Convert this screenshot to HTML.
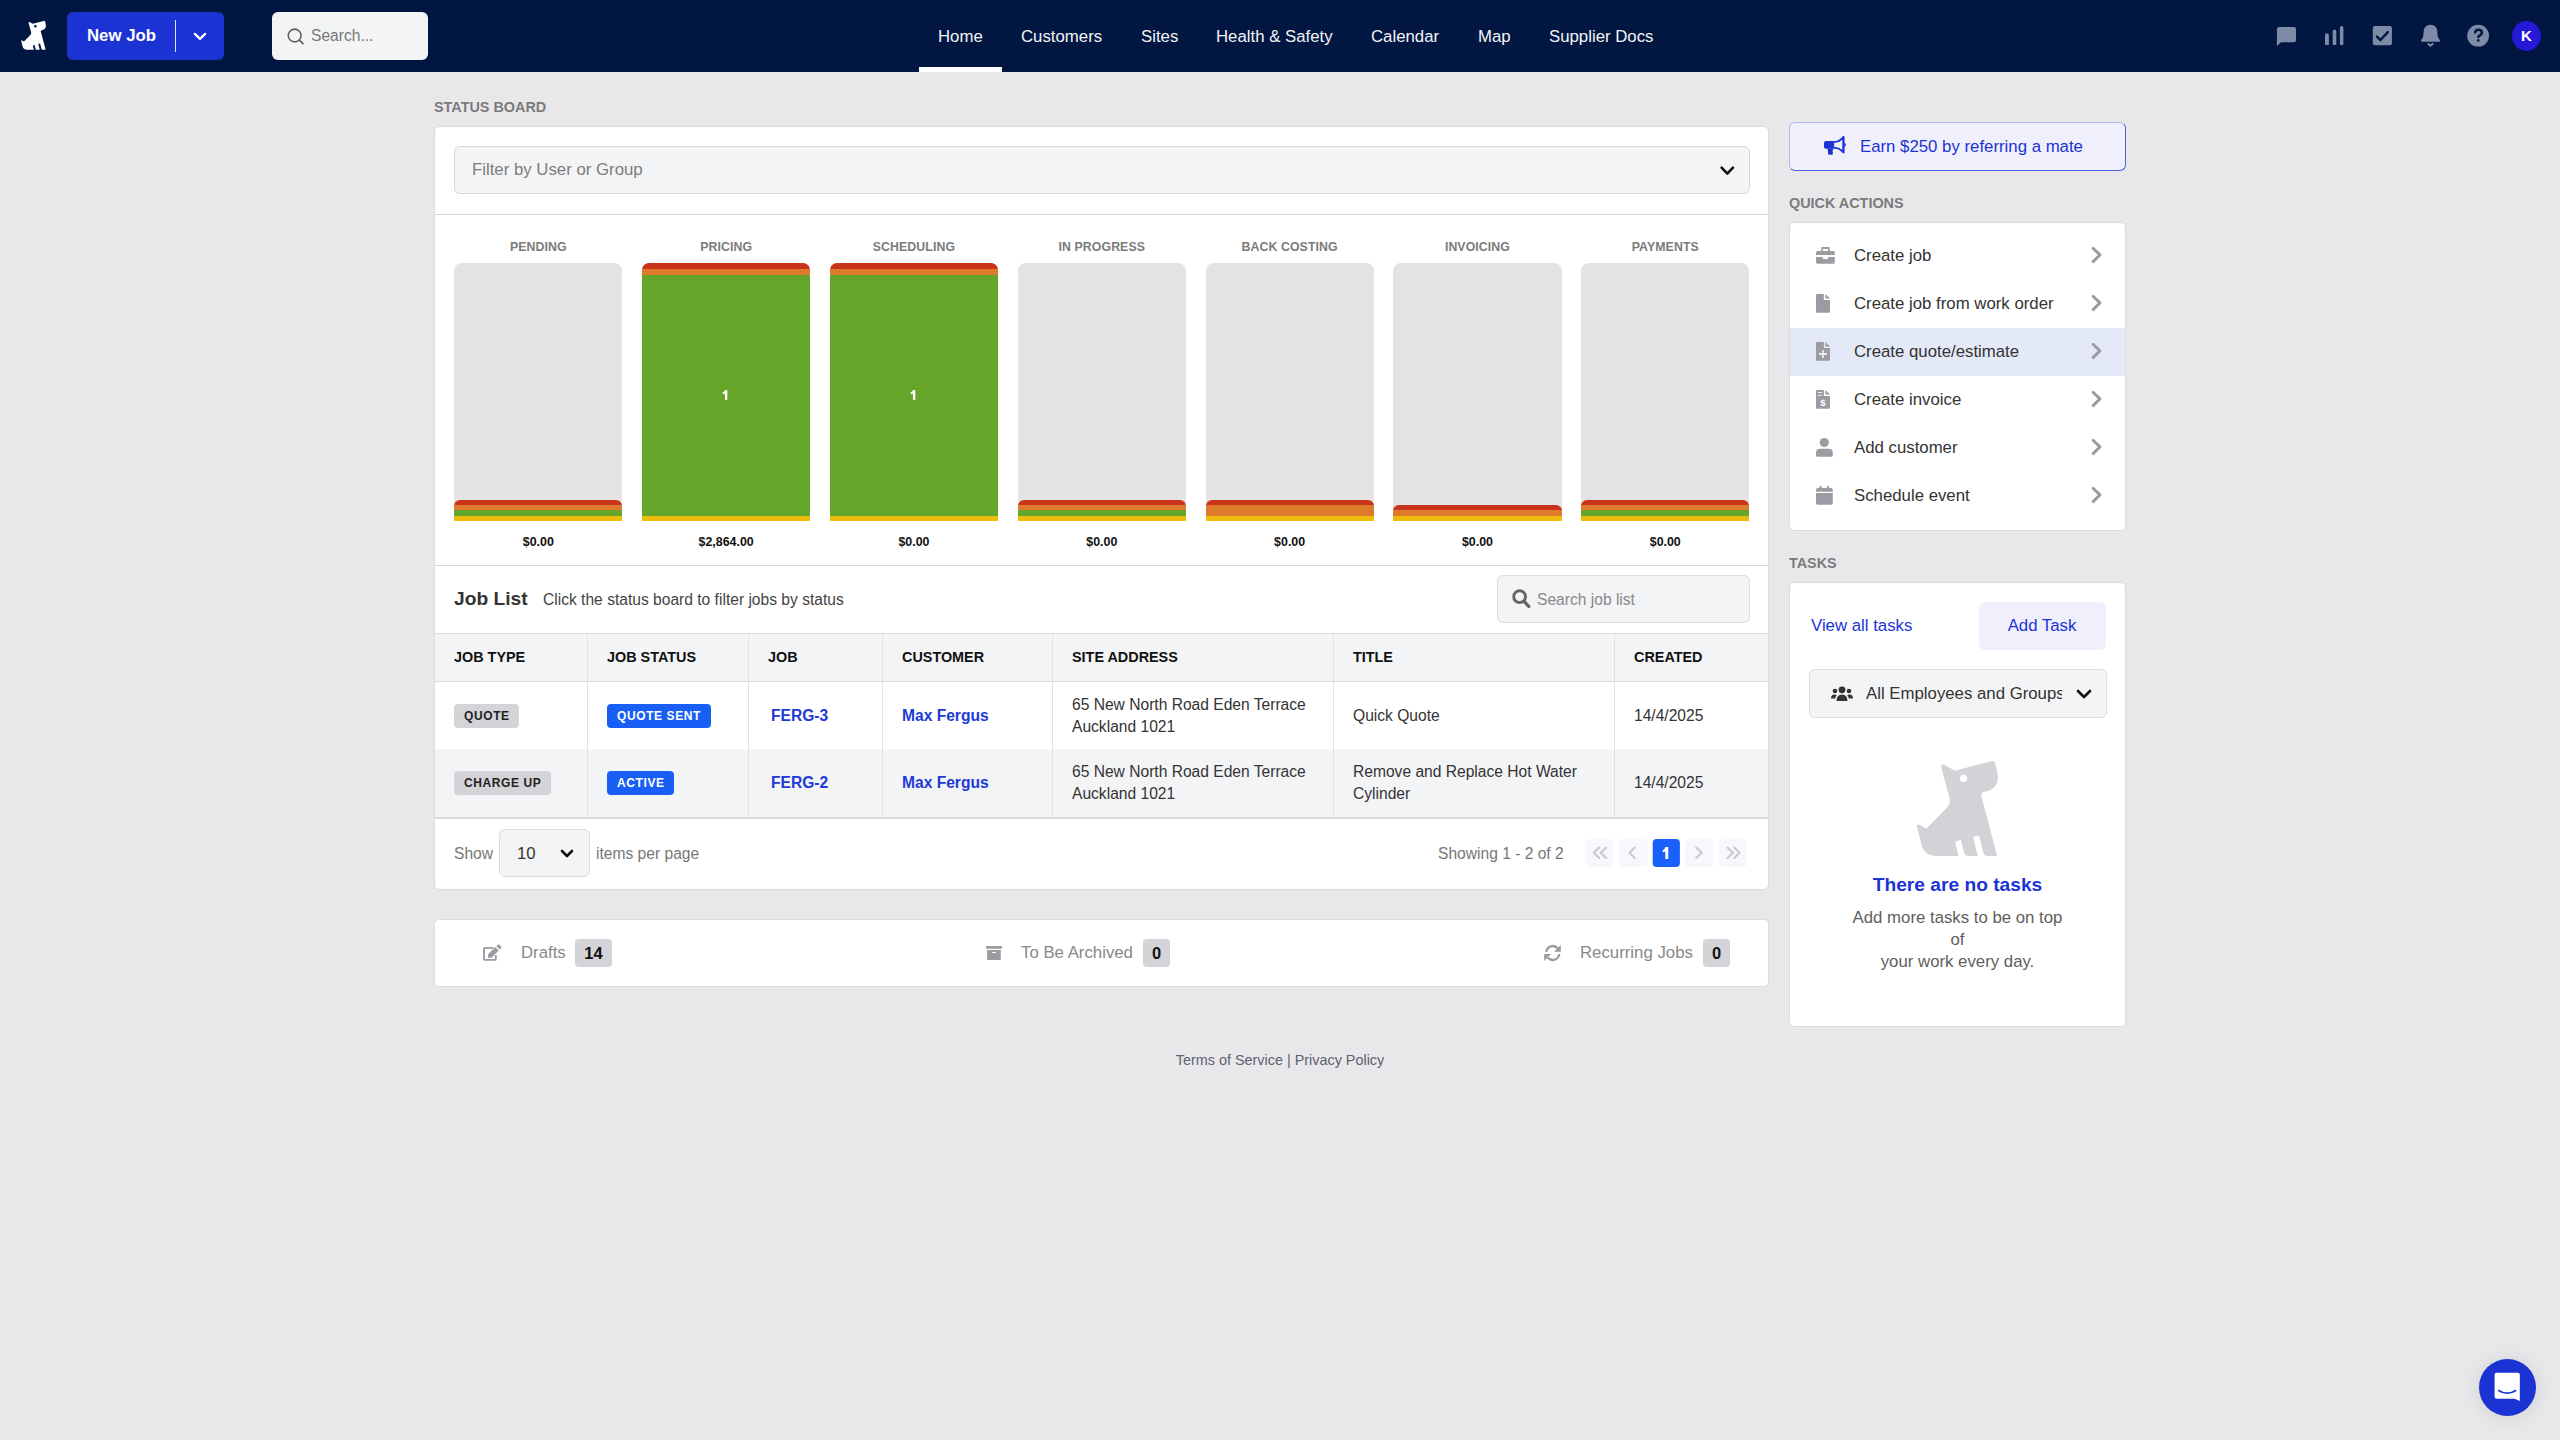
<!DOCTYPE html>
<html><head><meta charset="utf-8">
<style>
*{box-sizing:border-box;margin:0;padding:0}
html,body{width:2560px;height:1440px;overflow:hidden}
body{background:#e8e8eb;font-family:"Liberation Sans",sans-serif;position:relative;color:#333}
.abs{position:absolute}
/* NAV */
#nav{position:absolute;left:0;top:0;width:2560px;height:72px;background:#011640}
#newjob{left:67px;top:12px;width:157px;height:48px;background:#1c33d4;border-radius:6px;color:#fff}
#newjob .t{position:absolute;left:20px;top:0;line-height:48px;font-size:16.8px;font-weight:bold}
#newjob .sep{position:absolute;left:108px;top:8px;width:1px;height:32px;background:#dfe3f8}
#search{left:272px;top:12px;width:156px;height:48px;background:#f3f4f6;border-radius:6px}
#search .t{position:absolute;left:39px;top:0;line-height:48px;font-size:15.6px;color:#777}
.navl{position:absolute;top:0.5px;line-height:72px;font-size:16.8px;color:#f2f4f8}
#homebar{left:919px;top:67px;width:83px;height:5px;background:#fff}
.ni{position:absolute;top:24px}
#avatar{left:2512px;top:21px;width:29px;height:30px;border-radius:50%;background:#2518d6;color:#fff;font-weight:bold;font-size:15px;text-align:center;line-height:30px}
/* section labels */
.slabel{position:absolute;font-size:14.4px;font-weight:bold;color:#7b7b7b}
.card{position:absolute;background:#fff;border:1px solid #dcdce0;border-radius:5px}
.blabel{font-size:12.3px;font-weight:bold;color:#7b7b7b;text-align:center;line-height:20px;letter-spacing:0.1px}
.bamt{font-size:12.4px;font-weight:bold;color:#111;text-align:center;line-height:20px}
.th{font-size:14.4px;font-weight:bold;color:#111;line-height:20px}
.td{font-size:15.6px;color:#333;line-height:22px}
.link{font-size:15.6px;font-weight:bold;color:#1d3ad6;line-height:20px}
.badge{height:24px;line-height:24px;padding:0 9.5px 0 10px;border-radius:4px;font-size:12px;font-weight:bold;letter-spacing:0.6px}
.badge.grey{background:#d3d3d8;color:#222}
.badge.blue{background:#1a5ff5;color:#fff}
.pg{width:28px;height:28px;background:#f6f7fb;border-radius:4px;overflow:hidden}
.ft{font-size:16.8px;color:#888;line-height:24px}
.cnt{height:28px;line-height:28px;text-align:center;background:#d3d3d8;border-radius:4px;font-size:16.5px;font-weight:bold;color:#111}
.qat{font-size:16.8px;color:#333;line-height:48px}
</style></head>
<body>
<div id="nav">
  <svg class="abs" style="left:19.13px;top:19.2px" width="29.06" height="32.1" viewBox="0 0 1303 1440"><path d="M615 215 L1115 85 Q1160 72 1170 115 L1200 250 Q1215 330 1190 390 Q1140 490 1020 505 Q970 515 978 560 L1195 1385 L1065 1385 Q1020 1385 1008 1340 L945 1100 L865 1125 L930 1385 L795 1385 Q755 1385 745 1345 L695 1165 L620 1185 L665 1385 L365 1385 Q190 1385 155 1215 L97 990 Q90 940 135 960 L225 1010 L510 720 Q560 670 545 600 L430 175 Q420 120 470 135 Z" fill="#fff"/><circle cx="735" cy="322" r="55" fill="#011640"/></svg>
  <div id="newjob" class="abs"><span class="t">New Job</span><span class="sep"></span>
    <svg class="abs" style="left:126px;top:20px" width="14" height="10" viewBox="0 0 14 10"><path d="M1.9 1.9 L7 6.8 L12.1 1.9" stroke="#fff" stroke-width="2.3" fill="none" stroke-linecap="round" stroke-linejoin="round"/></svg>
  </div>
  <div id="search" class="abs">
    <svg class="abs" style="left:13px;top:14px" width="22" height="22" viewBox="0 0 22 22"><circle cx="9.65" cy="9.5" r="6.4" stroke="#606060" stroke-width="1.6" fill="none"/><path d="M14.3 14.2 L18 17.7" stroke="#606060" stroke-width="1.7" stroke-linecap="round"/></svg>
    <span class="t">Search...</span>
  </div>
  <span class="navl" style="left:938px">Home</span>
  <span class="navl" style="left:1021px">Customers</span>
  <span class="navl" style="left:1141px">Sites</span>
  <span class="navl" style="left:1216px">Health &amp; Safety</span>
  <span class="navl" style="left:1371px">Calendar</span>
  <span class="navl" style="left:1478px">Map</span>
  <span class="navl" style="left:1549px">Supplier Docs</span>
  <div id="homebar" class="abs"></div>
  <!-- right icons -->
<svg class="abs" style="left:2270px;top:20px" width="80" height="32" viewBox="0 0 80 32"><path d="M8.9 7 H24 Q26 7 26 9 V20.2 Q26 22.2 24 22.2 H11 L6.9 26 V9 Q6.9 7 8.9 7 Z" fill="#7d8ba6"/><path d="M55 15 Q55 13.2 56.95 13.2 Q58.9 13.2 58.9 15 V24.3 Q58.9 25 58.2 25 H55.7 Q55 25 55 24.3 Z" fill="#7d8ba6"/><path d="M62.7 11.4 Q62.7 9.6 64.5 9.6 Q66.3 9.6 66.3 11.4 V24.3 Q66.3 25 65.6 25 H63.4 Q62.7 25 62.7 24.3 Z" fill="#7d8ba6"/><path d="M69.9 7.8 Q69.9 6 71.65 6 Q73.4 6 73.4 7.8 V24.3 Q73.4 25 72.7 25 H70.6 Q69.9 25 69.9 24.3 Z" fill="#7d8ba6"/></svg><svg class="abs" style="left:2365px;top:20px" width="80" height="32" viewBox="0 0 80 32"><rect x="7.8" y="6" width="19.1" height="19.2" rx="2" fill="#7d8ba6"/><path d="M11.9 16.6 L15.4 20 L22.8 12.2" stroke="#011640" stroke-width="2.5" fill="none" stroke-linecap="round" stroke-linejoin="miter"/><path d="M65.5 4.8 Q71.8 4.8 72.3 11.5 L72.7 15.8 Q73 18.3 74.9 20.1 Q75.6 21.8 74 21.8 H57 Q55.4 21.8 56.1 20.1 Q58 18.3 58.3 15.8 L58.7 11.5 Q59.2 4.8 65.5 4.8 Z" fill="#7d8ba6"/><path d="M63.4 23.9 L65.5 25.7 L67.6 23.9" stroke="#7d8ba6" stroke-width="2" fill="none" stroke-linecap="round"/></svg><svg class="abs" style="left:2460px;top:18px" width="40" height="34" viewBox="0 0 40 34"><circle cx="18.1" cy="17.7" r="10.9" fill="#7d8ba6"/><path d="M15 14.3 Q15.8 11.7 18.6 11.7 Q21.9 11.7 21.9 14.7 Q21.9 16.2 20.2 17.2 Q18.3 18.3 18.3 19.1" stroke="#011640" stroke-width="2.5" fill="none" stroke-linecap="round"/><ellipse cx="18.3" cy="22.4" rx="1.3" ry="1.4" fill="#011640"/></svg>
  <div id="avatar" class="abs">K</div>
</div>

<div class="slabel" style="left:434px;top:99px">STATUS BOARD</div>
<div class="card" id="main" style="left:434px;top:126px;width:1335px;height:764px;overflow:hidden">
  <div class="abs" id="filter" style="left:19px;top:19px;width:1296px;height:48px;background:#f3f4f6;border:1px solid #d6d6db;border-radius:6px">
    <span class="abs" style="left:17px;top:0;line-height:46px;font-size:16.8px;color:#7d7d7d">Filter by User or Group</span>
    <svg class="abs" style="left:1264px;top:17px" width="16" height="12" viewBox="0 0 16 12"><path d="M2.6 3.6 L8.3 9.6 L14 3.6" stroke="#111" stroke-width="2.6" fill="none" stroke-linecap="round" stroke-linejoin="round"/></svg>
  </div>
  <div class="abs" style="left:0;top:87px;width:1335px;height:1px;background:#d6d6db"></div>
<div class="abs blabel" style="left:19.20px;top:110px;width:168.2px">PENDING</div>
<div class="abs" style="left:19.20px;top:136px;width:168.2px;height:258px;border-radius:8px 8px 0 0;background:#e3e3e3;overflow:hidden"><div class="abs" style="left:0;top:236.80px;width:100%;height:8.30px;background:#c8331a;border-radius:6px 6px 0 0;"></div><div class="abs" style="left:0;top:242.10px;width:100%;height:8.30px;background:#de7a2b;"></div><div class="abs" style="left:0;top:247.40px;width:100%;height:8.30px;background:#65a52a;"></div><div class="abs" style="left:0;top:252.70px;width:100%;height:8.30px;background:#ecbb0b;"></div></div>
<div class="abs bamt" style="left:19.20px;top:405px;width:168.2px">$0.00</div>
<div class="abs blabel" style="left:207.03px;top:110px;width:168.2px">PRICING</div>
<div class="abs" style="left:207.03px;top:136px;width:168.2px;height:258px;border-radius:7px 7px 0 0;overflow:hidden"><div class="abs" style="left:0;top:0;width:100%;height:9px;background:#c8331a"></div><div class="abs" style="left:0;top:6px;width:100%;height:7px;background:#de7a2b"></div><div class="abs" style="left:0;top:12px;width:100%;height:242px;background:#65a52a"></div><div class="abs" style="left:0;top:253px;width:100%;height:5px;background:#ecbb0b"></div><svg class="abs" style="left:68.1px;top:117px" width="30" height="30" viewBox="0 0 30 30"><path d="M15 10 H17.3 V19.8 H15 V13.4 Q14 13.9 12.7 13.9 V12.3 Q14.6 12.1 15.1 10 Z" fill="#fff"/></svg></div>
<div class="abs bamt" style="left:207.03px;top:405px;width:168.2px">$2,864.00</div>
<div class="abs blabel" style="left:394.86px;top:110px;width:168.2px">SCHEDULING</div>
<div class="abs" style="left:394.86px;top:136px;width:168.2px;height:258px;border-radius:7px 7px 0 0;overflow:hidden"><div class="abs" style="left:0;top:0;width:100%;height:9px;background:#c8331a"></div><div class="abs" style="left:0;top:6px;width:100%;height:7px;background:#de7a2b"></div><div class="abs" style="left:0;top:12px;width:100%;height:242px;background:#65a52a"></div><div class="abs" style="left:0;top:253px;width:100%;height:5px;background:#ecbb0b"></div><svg class="abs" style="left:68.1px;top:117px" width="30" height="30" viewBox="0 0 30 30"><path d="M15 10 H17.3 V19.8 H15 V13.4 Q14 13.9 12.7 13.9 V12.3 Q14.6 12.1 15.1 10 Z" fill="#fff"/></svg></div>
<div class="abs bamt" style="left:394.86px;top:405px;width:168.2px">$0.00</div>
<div class="abs blabel" style="left:582.69px;top:110px;width:168.2px">IN PROGRESS</div>
<div class="abs" style="left:582.69px;top:136px;width:168.2px;height:258px;border-radius:8px 8px 0 0;background:#e3e3e3;overflow:hidden"><div class="abs" style="left:0;top:236.80px;width:100%;height:8.30px;background:#c8331a;border-radius:6px 6px 0 0;"></div><div class="abs" style="left:0;top:242.10px;width:100%;height:8.30px;background:#de7a2b;"></div><div class="abs" style="left:0;top:247.40px;width:100%;height:8.30px;background:#65a52a;"></div><div class="abs" style="left:0;top:252.70px;width:100%;height:8.30px;background:#ecbb0b;"></div></div>
<div class="abs bamt" style="left:582.69px;top:405px;width:168.2px">$0.00</div>
<div class="abs blabel" style="left:770.52px;top:110px;width:168.2px">BACK COSTING</div>
<div class="abs" style="left:770.52px;top:136px;width:168.2px;height:258px;border-radius:8px 8px 0 0;background:#e3e3e3;overflow:hidden"><div class="abs" style="left:0;top:236.80px;width:100%;height:8.30px;background:#c8331a;border-radius:6px 6px 0 0;"></div><div class="abs" style="left:0;top:242.10px;width:100%;height:8.30px;background:#de7a2b;"></div><div class="abs" style="left:0;top:247.40px;width:100%;height:8.30px;background:#de7a2b;"></div><div class="abs" style="left:0;top:252.70px;width:100%;height:8.30px;background:#ecbb0b;"></div></div>
<div class="abs bamt" style="left:770.52px;top:405px;width:168.2px">$0.00</div>
<div class="abs blabel" style="left:958.35px;top:110px;width:168.2px">INVOICING</div>
<div class="abs" style="left:958.35px;top:136px;width:168.2px;height:258px;border-radius:8px 8px 0 0;background:#e3e3e3;overflow:hidden"><div class="abs" style="left:0;top:242.10px;width:100%;height:8.30px;background:#c8331a;border-radius:6px 6px 0 0;"></div><div class="abs" style="left:0;top:247.40px;width:100%;height:8.30px;background:#de7a2b;"></div><div class="abs" style="left:0;top:252.70px;width:100%;height:8.30px;background:#ecbb0b;"></div></div>
<div class="abs bamt" style="left:958.35px;top:405px;width:168.2px">$0.00</div>
<div class="abs blabel" style="left:1146.18px;top:110px;width:168.2px">PAYMENTS</div>
<div class="abs" style="left:1146.18px;top:136px;width:168.2px;height:258px;border-radius:8px 8px 0 0;background:#e3e3e3;overflow:hidden"><div class="abs" style="left:0;top:236.80px;width:100%;height:8.30px;background:#c8331a;border-radius:6px 6px 0 0;"></div><div class="abs" style="left:0;top:242.10px;width:100%;height:8.30px;background:#de7a2b;"></div><div class="abs" style="left:0;top:247.40px;width:100%;height:8.30px;background:#65a52a;"></div><div class="abs" style="left:0;top:252.70px;width:100%;height:8.30px;background:#ecbb0b;"></div></div>
<div class="abs bamt" style="left:1146.18px;top:405px;width:168.2px">$0.00</div>
  <div class="abs" style="left:0;top:438px;width:1335px;height:1px;background:#d6d6db"></div>
<!-- job list header -->
  <span class="abs" style="left:19px;top:458px;line-height:28px;font-size:19.2px;font-weight:bold;color:#333">Job List</span>
  <span class="abs" style="left:108px;top:461px;line-height:24px;font-size:15.6px;color:#444">Click the status board to filter jobs by status</span>
  <div class="abs" style="left:1062px;top:448px;width:253px;height:48px;background:#f3f4f6;border:1px solid #dcdce0;border-radius:6px">
    <svg class="abs" style="left:14px;top:13px" width="20" height="20" viewBox="0 0 20 20"><circle cx="7.6" cy="7.7" r="5.9" stroke="#666" stroke-width="2.9" fill="none"/><path d="M12 12.3 L16.8 17.3" stroke="#666" stroke-width="3.3" stroke-linecap="round"/></svg>
    <span class="abs" style="left:39px;top:1px;line-height:46px;font-size:15.6px;color:#888">Search job list</span>
  </div>
  <!-- table -->
<div class="abs" style="left:0;top:506px;width:1335px;height:49px;background:#f3f4f6;border-top:1px solid #dcdce0;border-bottom:1px solid #dcdce0"></div>
<div class="abs" style="left:0;top:622px;width:1335px;height:68px;background:#f3f4f6"></div>
<div class="abs" style="left:0;top:690px;width:1335px;height:2px;background:#dcdce0"></div>
<div class="abs" style="left:152px;top:507px;width:1px;height:183px;background:#e2e2e6"></div><div class="abs" style="left:313px;top:507px;width:1px;height:183px;background:#e2e2e6"></div><div class="abs" style="left:447px;top:507px;width:1px;height:183px;background:#e2e2e6"></div><div class="abs" style="left:617px;top:507px;width:1px;height:183px;background:#e2e2e6"></div><div class="abs" style="left:898px;top:507px;width:1px;height:183px;background:#e2e2e6"></div><div class="abs" style="left:1179px;top:507px;width:1px;height:183px;background:#e2e2e6"></div>
<span class="abs th" style="left:19px;top:520px">JOB TYPE</span><span class="abs th" style="left:172px;top:520px">JOB STATUS</span><span class="abs th" style="left:333px;top:520px">JOB</span><span class="abs th" style="left:467px;top:520px">CUSTOMER</span><span class="abs th" style="left:637px;top:520px">SITE ADDRESS</span><span class="abs th" style="left:918px;top:520px">TITLE</span><span class="abs th" style="left:1199px;top:520px">CREATED</span>
<span class="abs badge grey" style="left:19px;top:576.5px">QUOTE</span><span class="abs badge blue" style="left:172px;top:576.5px">QUOTE SENT</span><span class="abs link" style="left:336px;top:578.5px">FERG-3</span><span class="abs link" style="left:467px;top:578.5px">Max Fergus</span><span class="abs td" style="left:637px;top:566.5px">65 New North Road Eden Terrace<br>Auckland 1021</span><span class="abs td" style="left:918px;top:577.5px">Quick Quote</span><span class="abs td" style="left:1199px;top:577.5px">14/4/2025</span>
<span class="abs badge grey" style="left:19px;top:644.0px">CHARGE UP</span><span class="abs badge blue" style="left:172px;top:644.0px">ACTIVE</span><span class="abs link" style="left:336px;top:646.0px">FERG-2</span><span class="abs link" style="left:467px;top:646.0px">Max Fergus</span><span class="abs td" style="left:637px;top:634.0px">65 New North Road Eden Terrace<br>Auckland 1021</span><span class="abs td" style="left:918px;top:634.0px">Remove and Replace Hot Water<br>Cylinder</span><span class="abs td" style="left:1199px;top:645.0px">14/4/2025</span>
  <!-- pagination -->
  <span class="abs" style="left:19px;top:717px;line-height:20px;font-size:15.6px;color:#777">Show</span>
  <div class="abs" style="left:64px;top:702px;width:91px;height:48px;background:#f3f4f6;border:1px solid #dcdce0;border-radius:6px">
    <span class="abs" style="left:17px;top:1px;line-height:46px;font-size:16.8px;color:#333">10</span>
    <svg class="abs" style="left:60px;top:18px" width="14" height="12" viewBox="0 0 14 12"><path d="M2 3 L7 8 L12 3" stroke="#111" stroke-width="2.6" fill="none" stroke-linecap="round" stroke-linejoin="round"/></svg>
  </div>
  <span class="abs" style="left:161px;top:717px;line-height:20px;font-size:15.6px;color:#777">items per page</span>
  <span class="abs" style="left:1003px;top:717px;line-height:20px;font-size:15.6px;color:#777">Showing 1 - 2 of 2</span>
  <svg class="abs" style="left:1145px;top:708px" width="170" height="35" viewBox="0 0 170 35"><rect x="5.6" y="4" width="27.9" height="27.9" rx="4" fill="#f7f8fc"/><rect x="39.2" y="4" width="28.5" height="27.9" rx="4" fill="#f7f8fc"/><rect x="72.7" y="4" width="27.2" height="27.9" rx="4" fill="#1a60fa"/><rect x="104.9" y="4" width="28.6" height="27.9" rx="4" fill="#f7f8fc"/><rect x="138.8" y="4" width="27.9" height="27.9" rx="4" fill="#f7f8fc"/><g stroke="#c9c9ce" stroke-width="2.1" fill="none" stroke-linecap="round" stroke-linejoin="round"><path d="M19.2 12.6 L13.7 17.8 L19.2 23 M26.2 12.6 L20.7 17.8 L26.2 23"/><path d="M54.6 12.6 L49.5 17.8 L54.6 23"/><path d="M116.2 12.6 L121.6 17.8 L116.2 23"/><path d="M147.6 12.6 L153 17.8 L147.6 23 M154.2 12.6 L159.6 17.8 L154.2 23"/></g><path d="M85.3 12 H88.3 V23.9 H85.3 V16.6 Q84.2 17.3 82.7 17.3 V15.2 Q84.8 14.9 85.3 12 Z" fill="#fff"/></svg>
</div>

<div class="slabel" style="left:1789px;top:195px">QUICK ACTIONS</div>
<div class="card" id="qa" style="left:1789px;top:222px;width:337px;height:309px;overflow:hidden"><div class="abs" style="left:0;top:9px;width:335px;height:48px;"><svg class="abs" style="left:20px;top:8px" width="30" height="30" viewBox="0 0 30 30"><path d="M11.2 11 V7.8 Q11.2 7 12 7 H18.9 Q19.7 7 19.7 7.8 V11 H17.9 V9 H12.8 V11 Z" fill="#9b9ba1"/><path d="M6 12.5 Q6 11 7.5 11 H23.3 Q24.8 11 24.8 12.5 V15 H6 Z" fill="#9b9ba1"/><path d="M6 17 H12.8 V19 H18 V17 H24.8 V22.2 Q24.8 23.7 23.3 23.7 H7.5 Q6 23.7 6 22.2 Z" fill="#9b9ba1"/></svg><span class="abs qat" style="left:64px;top:0">Create job</span><svg class="abs" style="left:295px;top:8px" width="24" height="30" viewBox="0 0 24 30"><path d="M8.1 8.2 L14.9 14.9 L8.1 21.6" stroke="#9b9ba1" stroke-width="2.9" fill="none" stroke-linecap="round" stroke-linejoin="round"/></svg></div><div class="abs" style="left:0;top:57px;width:335px;height:48px;"><svg class="abs" style="left:20px;top:8px" width="30" height="30" viewBox="0 0 30 30"><path d="M6 6.7 Q6 6 6.7 6 H13.8 V11.9 H20 V24.1 Q20 24.8 19.3 24.8 H6.7 Q6 24.8 6 24.1 Z" fill="#9b9ba1"/><path d="M15.3 6 L20 10.6 H15.3 Z" fill="#9b9ba1"/></svg><span class="abs qat" style="left:64px;top:0">Create job from work order</span><svg class="abs" style="left:295px;top:8px" width="24" height="30" viewBox="0 0 24 30"><path d="M8.1 8.2 L14.9 14.9 L8.1 21.6" stroke="#9b9ba1" stroke-width="2.9" fill="none" stroke-linecap="round" stroke-linejoin="round"/></svg></div><div class="abs" style="left:0;top:105px;width:335px;height:48px;background:#e4e9f8;"><svg class="abs" style="left:20px;top:8px" width="30" height="30" viewBox="0 0 30 30"><path d="M6 6.7 Q6 6 6.7 6 H13.8 V11.9 H20 V24.1 Q20 24.8 19.3 24.8 H6.7 Q6 24.8 6 24.1 Z" fill="#9b9ba1"/><path d="M15.3 6 L20 10.6 H15.3 Z" fill="#9b9ba1"/><path d="M12.1 14 H13.9 V17.1 H17 V18.9 H13.9 V21.9 H12.1 V18.9 H9 V17.1 H12.1 Z" fill="#e4e9f8"/></svg><span class="abs qat" style="left:64px;top:0">Create quote/estimate</span><svg class="abs" style="left:295px;top:8px" width="24" height="30" viewBox="0 0 24 30"><path d="M8.1 8.2 L14.9 14.9 L8.1 21.6" stroke="#9b9ba1" stroke-width="2.9" fill="none" stroke-linecap="round" stroke-linejoin="round"/></svg></div><div class="abs" style="left:0;top:153px;width:335px;height:48px;"><svg class="abs" style="left:20px;top:8px" width="30" height="30" viewBox="0 0 30 30"><path d="M6 6.7 Q6 6 6.7 6 H13.8 V11.9 H20 V24.1 Q20 24.8 19.3 24.8 H6.7 Q6 24.8 6 24.1 Z" fill="#9b9ba1"/><path d="M15.3 6 L20 10.6 H15.3 Z" fill="#9b9ba1"/><rect x="8" y="8.1" width="3.8" height="0.9" fill="#fff"/><rect x="8" y="10.9" width="3.8" height="0.9" fill="#fff"/><text x="13" y="22" font-size="9.5" font-weight="bold" fill="#fff" text-anchor="middle" font-family="Liberation Sans">$</text></svg><span class="abs qat" style="left:64px;top:0">Create invoice</span><svg class="abs" style="left:295px;top:8px" width="24" height="30" viewBox="0 0 24 30"><path d="M8.1 8.2 L14.9 14.9 L8.1 21.6" stroke="#9b9ba1" stroke-width="2.9" fill="none" stroke-linecap="round" stroke-linejoin="round"/></svg></div><div class="abs" style="left:0;top:201px;width:335px;height:48px;"><svg class="abs" style="left:20px;top:8px" width="30" height="30" viewBox="0 0 30 30"><circle cx="14.3" cy="10.5" r="4.6" fill="#9b9ba1"/><path d="M6 21 Q6 16.8 10 16.8 H18.8 Q22.8 16.8 22.8 21 V23.3 Q22.8 24.8 21.3 24.8 H7.5 Q6 24.8 6 23.3 Z" fill="#9b9ba1"/></svg><span class="abs qat" style="left:64px;top:0">Add customer</span><svg class="abs" style="left:295px;top:8px" width="24" height="30" viewBox="0 0 24 30"><path d="M8.1 8.2 L14.9 14.9 L8.1 21.6" stroke="#9b9ba1" stroke-width="2.9" fill="none" stroke-linecap="round" stroke-linejoin="round"/></svg></div><div class="abs" style="left:0;top:249px;width:335px;height:48px;"><svg class="abs" style="left:20px;top:8px" width="30" height="30" viewBox="0 0 30 30"><rect x="9.5" y="6" width="2.2" height="3" rx="0.8" fill="#9b9ba1"/><rect x="16.9" y="6" width="2.1" height="3" rx="0.8" fill="#9b9ba1"/><path d="M6 10.1 Q6 8.1 8 8.1 H20.8 Q22.8 8.1 22.8 10.1 V11.8 H6 Z" fill="#9b9ba1"/><path d="M6 13 H22.8 V22.8 Q22.8 24.8 20.8 24.8 H8 Q6 24.8 6 22.8 Z" fill="#9b9ba1"/></svg><span class="abs qat" style="left:64px;top:0">Schedule event</span><svg class="abs" style="left:295px;top:8px" width="24" height="30" viewBox="0 0 24 30"><path d="M8.1 8.2 L14.9 14.9 L8.1 21.6" stroke="#9b9ba1" stroke-width="2.9" fill="none" stroke-linecap="round" stroke-linejoin="round"/></svg></div></div>

<div class="slabel" style="left:1789px;top:555px">TASKS</div>
<div class="card" id="tasks" style="left:1789px;top:582px;width:337px;height:445px">
  <span class="abs" style="left:21px;top:32px;line-height:22px;font-size:16.8px;color:#1c33d4">View all tasks</span>
  <div class="abs" style="left:189px;top:19px;width:127px;height:48px;padding-right:1px;background:#f0f0fc;border-radius:6px;text-align:center;line-height:48px;font-size:16.8px;color:#1c33d4">Add Task</div>
  <div class="abs" style="left:19px;top:86px;width:298px;height:49px;background:#f3f4f6;border:1px solid #dcdce0;border-radius:6px;overflow:hidden">
    <svg class="abs" style="left:21px;top:16px" width="22" height="16" viewBox="0 0 22 16"><circle cx="11" cy="3.8" r="3.4" fill="#333"/><circle cx="4" cy="5" r="2.3" fill="#333"/><circle cx="18" cy="5" r="2.3" fill="#333"/><path d="M5.5 15 Q5.5 8.5 11 8.5 Q16.5 8.5 16.5 15 Z" fill="#333"/><path d="M0 12.5 Q0 8.5 3.5 8.5 Q5 8.5 5.8 9.3 Q4.3 10.8 4.2 12.5 Z" fill="#333"/><path d="M22 12.5 Q22 8.5 18.5 8.5 Q17 8.5 16.2 9.3 Q17.7 10.8 17.8 12.5 Z" fill="#333"/></svg>
    <span class="abs" style="left:56px;top:0;width:196px;overflow:hidden;white-space:nowrap;line-height:47px;font-size:16.8px;color:#333">All Employees and Groups</span>
    <svg class="abs" style="left:266px;top:18px" width="16" height="12" viewBox="0 0 16 12"><path d="M2 3 L8 9 L14 3" stroke="#111" stroke-width="2.6" fill="none" stroke-linecap="round" stroke-linejoin="round"/></svg>
  </div>
  <svg class="abs" style="left:120px;top:172px" width="95" height="105" viewBox="0 0 1303 1440"><path d="M615 215 L1115 85 Q1160 72 1170 115 L1200 250 Q1215 330 1190 390 Q1140 490 1020 505 Q970 515 978 560 L1195 1385 L1065 1385 Q1020 1385 1008 1340 L945 1100 L865 1125 L930 1385 L795 1385 Q755 1385 745 1345 L695 1165 L620 1185 L665 1385 L365 1385 Q190 1385 155 1215 L97 990 Q90 940 135 960 L225 1010 L510 720 Q560 670 545 600 L430 175 Q420 120 470 135 Z" fill="#d2d2d7"/><circle cx="735" cy="322" r="50" fill="#fff"/></svg>
  <div class="abs" style="left:0;top:290px;width:335px;text-align:center;line-height:24px;font-size:19.2px;font-weight:bold;color:#1c33d4">There are no tasks</div>
  <div class="abs" style="left:0;top:324px;width:335px;text-align:center;line-height:21.8px;font-size:16.8px;color:#5e5e5e">Add more tasks to be on top<br>of<br>your work every day.</div>
</div>


<div class="abs" style="left:1789px;top:122px;width:337px;height:49px;background:#f0f0fc;border:1px solid;border-color:#b0baec #4b62dc #4b62dc #b0baec;border-radius:6px">
  <svg class="abs" style="left:25px;top:7px" width="40" height="30" viewBox="0 0 40 30"><path d="M9 13 Q9 11 11 11 H18.8 V18.8 H11 Q9 18.8 9 16.8 Z" fill="#1c33d4"/><path d="M12.6 18.5 H18.2 L17.6 21.2 Q18.4 24.8 16.8 24.8 H14.4 Q13.4 24.8 13.1 23.4 Z" fill="#1c33d4"/><path d="M18.5 11 H20 Q24 11 27.7 6.3 Q28.6 5.5 29.6 6.6 V22.8 Q28.6 23.9 27.7 23.1 Q24 18.8 20 18.8 H18.5 Z" fill="#1c33d4"/><path d="M19.2 12.7 H20.2 Q24.2 12.7 27.3 9.7 V20 Q24.2 17.1 20.2 17.1 H19.2 Z" fill="#f0f0fc"/><path d="M29.4 12.4 Q30.9 13.3 30.9 14.8 Q30.9 16.2 29.4 17.1 Z" fill="#1c33d4"/></svg>
  <span class="abs" style="left:70px;top:0;line-height:47px;font-size:16.8px;color:#1c33d4">Earn $250 by referring a mate</span>
</div>
<div class="card" style="left:434px;top:919px;width:1335px;height:68px">
  <svg class="abs" style="left:43px;top:18px" width="30" height="30" viewBox="0 0 30 30"><path d="M15.5 9.9 H6.9 Q6 9.9 6 10.8 V21 Q6 21.9 6.9 21.9 H16.9 Q17.8 21.9 17.8 21 V17" stroke="#9b9ba1" stroke-width="1.9" fill="none"/><path d="M10 19.7 L10.1 16.3 L17.3 9.1 L20.8 12.5 L13.6 19.7 Z" fill="#9b9ba1"/><path d="M18.4 8 L19.6 6.8 Q20.5 6 21.4 6.8 L23 8.4 Q23.8 9.3 23 10.2 L21.8 11.4 Z" fill="#9b9ba1"/></svg>
  <span class="abs ft" style="left:86px;top:21px">Drafts</span>
  <span class="abs cnt" style="left:140px;top:19px;width:37px">14</span>
  <svg class="abs" style="left:545px;top:18px" width="30" height="30" viewBox="0 0 30 30"><rect x="6" y="8" width="16.2" height="2.8" rx="0.8" fill="#9b9ba1"/><path d="M7.1 12.1 H20.8 V21 Q20.8 22 19.8 22 H8.1 Q7.1 22 7.1 21 Z" fill="#9b9ba1"/><rect x="12" y="14" width="4" height="1.1" rx="0.5" fill="#fff"/></svg>
  <span class="abs ft" style="left:586px;top:21px">To Be Archived</span>
  <span class="abs cnt" style="left:708px;top:19px;width:27px">0</span>
  <svg class="abs" style="left:1103px;top:18px" width="30" height="30" viewBox="0 0 30 30"><path d="M8.2 13.8 A6.6 6.6 0 0 1 19.6 10.2" stroke="#9b9ba1" stroke-width="2.3" fill="none"/><path d="M22.8 6.9 V13.8 H16 Z" fill="#9b9ba1"/><path d="M21.3 16 A6.6 6.6 0 0 1 9.9 19.8" stroke="#9b9ba1" stroke-width="2.3" fill="none"/><path d="M6.2 23 V16 H13.2 Z" fill="#9b9ba1"/></svg>
  <span class="abs ft" style="left:1145px;top:21px">Recurring Jobs</span>
  <span class="abs cnt" style="left:1268px;top:19px;width:27px">0</span>
</div>
<div class="abs" style="left:0;top:1050px;width:2560px;text-align:center;font-size:14.4px;color:#5d6170;line-height:20px">Terms of Service | Privacy Policy</div>
<div class="abs" style="left:2479px;top:1359px;width:57px;height:57px;border-radius:50%;background:#1c33d4;box-shadow:0 1px 20px rgba(0,0,0,0.10)">
  <svg class="abs" style="left:0;top:0" width="57" height="57" viewBox="0 0 57 57"><path d="M17.6 13.8 H38.8 Q40.8 13.8 40.8 15.8 V42 L35.5 39.8 H17.6 Q15.6 39.8 15.6 37.8 V15.8 Q15.6 13.8 17.6 13.8 Z" fill="#fff"/><path d="M19.2 31.2 Q28.2 37.2 37.2 31.2" stroke="#1c33d4" stroke-width="1.7" fill="none"/></svg>
</div>
</body></html>
